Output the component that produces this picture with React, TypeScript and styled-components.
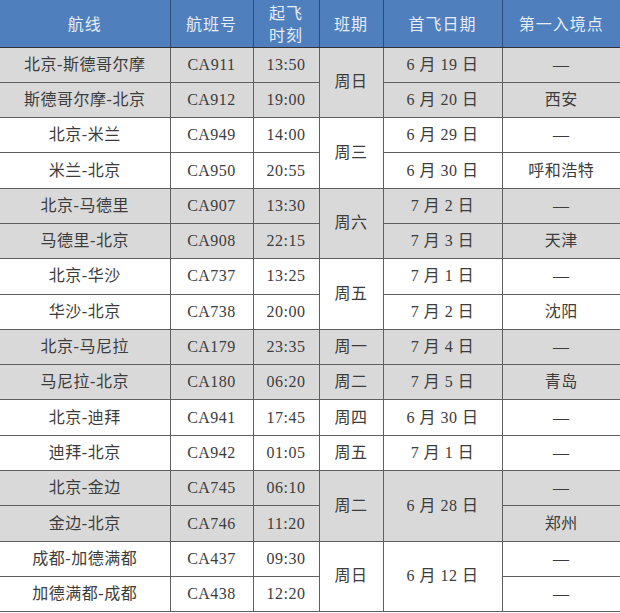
import React from 'react'
import styled, { createGlobalStyle } from 'styled-components'

type Span = { text: string; rows?: number } | null

type Flight = {
  route: string
  code: string
  time: string
  week: Span
  date: Span
  entry: string
}

const flights: Flight[] = [
  { route: '北京-斯德哥尔摩', code: 'CA911', time: '13:50', week: { text: '周日', rows: 2 }, date: { text: '6 月 19 日' }, entry: '—' },
  { route: '斯德哥尔摩-北京', code: 'CA912', time: '19:00', week: null, date: { text: '6 月 20 日' }, entry: '西安' },
  { route: '北京-米兰', code: 'CA949', time: '14:00', week: { text: '周三', rows: 2 }, date: { text: '6 月 29 日' }, entry: '—' },
  { route: '米兰-北京', code: 'CA950', time: '20:55', week: null, date: { text: '6 月 30 日' }, entry: '呼和浩特' },
  { route: '北京-马德里', code: 'CA907', time: '13:30', week: { text: '周六', rows: 2 }, date: { text: '7 月 2 日' }, entry: '—' },
  { route: '马德里-北京', code: 'CA908', time: '22:15', week: null, date: { text: '7 月 3 日' }, entry: '天津' },
  { route: '北京-华沙', code: 'CA737', time: '13:25', week: { text: '周五', rows: 2 }, date: { text: '7 月 1 日' }, entry: '—' },
  { route: '华沙-北京', code: 'CA738', time: '20:00', week: null, date: { text: '7 月 2 日' }, entry: '沈阳' },
  { route: '北京-马尼拉', code: 'CA179', time: '23:35', week: { text: '周一' }, date: { text: '7 月 4 日' }, entry: '—' },
  { route: '马尼拉-北京', code: 'CA180', time: '06:20', week: { text: '周二' }, date: { text: '7 月 5 日' }, entry: '青岛' },
  { route: '北京-迪拜', code: 'CA941', time: '17:45', week: { text: '周四' }, date: { text: '6 月 30 日' }, entry: '—' },
  { route: '迪拜-北京', code: 'CA942', time: '01:05', week: { text: '周五' }, date: { text: '7 月 1 日' }, entry: '—' },
  { route: '北京-金边', code: 'CA745', time: '06:10', week: { text: '周二', rows: 2 }, date: { text: '6 月 28 日', rows: 2 }, entry: '—' },
  { route: '金边-北京', code: 'CA746', time: '11:20', week: null, date: null, entry: '郑州' },
  { route: '成都-加德满都', code: 'CA437', time: '09:30', week: { text: '周日', rows: 2 }, date: { text: '6 月 12 日', rows: 2 }, entry: '—' },
  { route: '加德满都-成都', code: 'CA438', time: '12:20', week: null, date: null, entry: '—' },
]

const columns = [170, 83, 66, 64, 119, 118]

const GlobalStyle = createGlobalStyle`
  body {
    margin: 0;
    background: #ffffff;
    font-family: "Liberation Serif", "Noto Sans CJK SC", serif;
  }
`

export default function App() {
  return (
    <>
      <GlobalStyle />
      <Table>
        <colgroup>
          {columns.map((w, i) => (
            <col key={i} style={{ width: w }} />
          ))}
        </colgroup>
        <thead>
          <HeadRow>
            <HeadCell>航线</HeadCell>
            <HeadCell>航班号</HeadCell>
            <HeadCell>
              起飞
              <br />
              时刻
            </HeadCell>
            <HeadCell>班期</HeadCell>
            <HeadCell>首飞日期</HeadCell>
            <HeadCell>第一入境点</HeadCell>
          </HeadRow>
        </thead>
        <tbody>
          {flights.map((f, i) => (
            <Row key={f.code} $grey={Math.floor(i / 2) % 2 === 0}>
              <Cell>{f.route}</Cell>
              <Cell>{f.code}</Cell>
              <Cell>{f.time}</Cell>
              {f.week && <Cell rowSpan={f.week.rows ?? 1}>{f.week.text}</Cell>}
              {f.date && <Cell rowSpan={f.date.rows ?? 1}>{f.date.text}</Cell>}
              <Cell>{f.entry}</Cell>
            </Row>
          ))}
        </tbody>
      </Table>
    </>
  )
}

const Table = styled.table`
  width: 620px;
  table-layout: fixed;
  border-collapse: collapse;
  border-spacing: 0;

  td:first-child,
  th:first-child {
    border-left: none;
  }

  td:last-child,
  th:last-child {
    border-right: none;
  }
`

const HeadRow = styled.tr`
  height: 47px;
  background: #4f7fbd;
`

const HeadCell = styled.th`
  padding: 0;
  border: 1px solid #2e4c78;
  border-top: none;
  border-bottom: 1px solid #333333;
  color: #e6edf7;
  font-family: "Noto Sans CJK SC", sans-serif;
  font-size: 16px;
  font-weight: 400;
  line-height: 22px;
  text-align: center;
  vertical-align: middle;
  letter-spacing: 1px;
`

type RowProps = {
  $grey: boolean
}

const Row = styled.tr<RowProps>`
  height: 35.3px;
  background: ${({ $grey }) => ($grey ? '#d9d9d9' : '#ffffff')};
`

const Cell = styled.td`
  padding: 0;
  border: 1px solid #5f5f5f;
  color: #3c3c3c;
  font-size: 16px;
  line-height: 20px;
  text-align: center;
  vertical-align: middle;
  white-space: nowrap;
  letter-spacing: 0.5px;
`
